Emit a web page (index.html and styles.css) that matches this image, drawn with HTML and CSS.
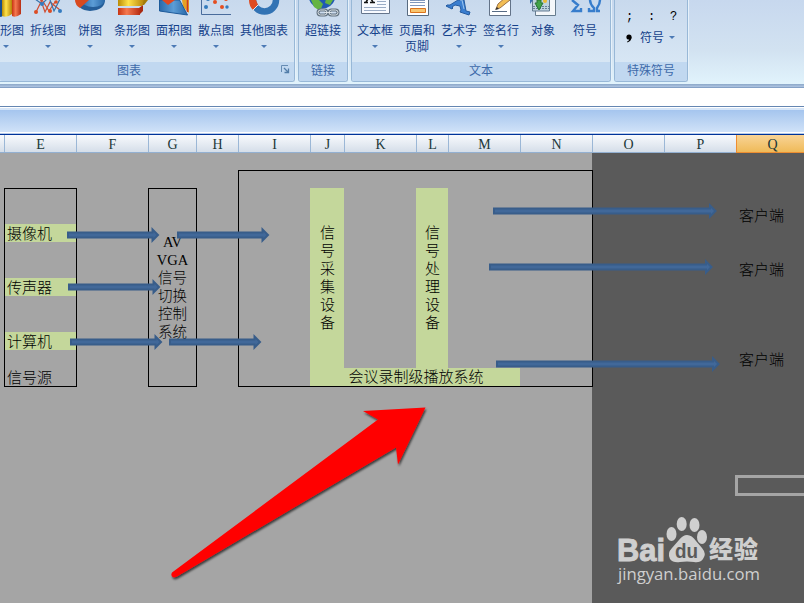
FILE: index.html
```
<!DOCTYPE html>
<html lang="zh-CN">
<head>
  <meta charset="utf-8">
  <title>会议录制级播放系统</title>
  <link rel="stylesheet" href="styles.css">
</head>
<body>
  <div class="ribbon">
    <div class="group charts">
      <div class="items">
        <div class="item">
          <svg width="42" height="18"><path d="M13 0h6v15l-3 2-3-1z" fill="#174f91"/><path d="M17 0h10v14q-5 4-10 2z" fill="url(#gold)"/><path d="M27 0h9v14q-5 4-9 2z" fill="url(#red)"/></svg>
          <span>柱形图</span><i class="arrow"></i>
        </div>
        <div class="item">
          <svg width="42" height="18"><path d="M9 12L15 0l7 11 6-9M13 -2l5 14 5-10 10 8" fill="none" stroke="#cf4d32" stroke-width="1.2"/><path d="M8 -1l7 5 7-7 5 14 6-12" fill="none" stroke="#3674ac" stroke-width="1.2"/><g fill="#dc4d25"><circle cx="9" cy="12" r="2"/><circle cx="23" cy="11" r="2"/><circle cx="29" cy="2" r="1.800"/></g><g fill="#347bc0"><circle cx="15" cy="4" r="2"/><circle cx="33" cy="11" r="2"/></g></svg>
          <span>折线图</span><i class="arrow"></i>
        </div>
        <div class="item">
          <svg width="42" height="18"><path d="M8 0Q8 10 21 11q15-1 15-11z" fill="#255e99"/><path d="M12 0q2 7 12 7 10 0 12-7z" fill="url(#blue)"/><path d="M6 0q0 5 5 8L20 0z" fill="#d84a20"/></svg>
          <span>饼图</span><i class="arrow"></i>
        </div>
        <div class="item">
          <svg width="42" height="18"><path d="M28 8l4-3v6l-4 4z" fill="#a92a12"/><path d="M7 8h22v7H7z" fill="url(#red)"/><path d="M32 0h5l-4 5h-2z" fill="#a37c08"/><path d="M7 0h26l-2 6H7z" fill="url(#gold)"/></svg>
          <span>条形图</span><i class="arrow"></i>
        </div>
        <div class="item">
          <svg width="42" height="18"><path d="M29 0h7v13l-6-6z" fill="#e6a125"/><path d="M34.500 0v12" stroke="#cc3928" stroke-width="1.500"/><path d="M6.500 0h20l8 15-28-4z" fill="url(#blue)" stroke="#1e5b9b"/><path d="M9 0h13l-7 5z" fill="#df4821"/></svg>
          <span>面积图</span><i class="arrow"></i>
        </div>
        <div class="item">
          <svg width="42" height="18"><path d="M6.500 0v14.500H36" fill="none" stroke="#496c9c"/><g fill="#e44e20"><circle cx="20" cy="2" r="2"/><circle cx="27" cy="7" r="2"/><circle cx="31" cy="-1" r="2"/></g><g fill="#347bbc"><circle cx="11" cy="7" r="2"/><circle cx="32" cy="7" r="1.700"/><circle cx="13" cy="-1" r="2"/></g></svg>
          <span>散点图</span><i class="arrow"></i>
        </div>
        <div class="item wide">
          <svg width="54" height="18"><path d="M16 0a11.500 11.500 0 0 0 23 0" fill="none" stroke="#3273b4" stroke-width="6.500"/><path d="M12 0q0 6 4 10l5-5-2-5z" fill="#df4b21"/><path d="M16 10l5-5" stroke="#efe6e5"/></svg>
          <span>其他图表</span><i class="arrow"></i>
        </div>
      </div>
      <div class="group-name">图表
        <svg class="launcher" width="9" height="9"><path d="M.5 7V.5H7" fill="none" stroke="#668cb3"/><path d="M3 3l4 4M7.500 3.500v4h-4" fill="none" stroke="#527da9" stroke-width="1.300"/></svg>
      </div>
    </div>

    <div class="group links">
      <div class="items">
        <div class="item">
          <svg width="42" height="18"><path d="M7 -1a13.500 13.500 0 0 0 26 0z" fill="#2059b4"/><path d="M9 0l8 0 4 4-3 7-6-4zM24 -1l7 1-3 5-5-2z" fill="#64b443"/><g fill="none" stroke="#60707e" stroke-width="3"><rect x="16" y="10" width="9" height="5" rx="2.500"/><rect x="27" y="10" width="9" height="5" rx="2.500"/></g><g fill="none" stroke="#dce3e8"><rect x="16" y="10" width="9" height="5" rx="2.500"/><rect x="27" y="10" width="9" height="5" rx="2.500"/><path d="M22 12.500h8"/></g></svg>
          <span>超链接</span>
        </div>
      </div>
      <div class="group-name">链接</div>
    </div>

    <div class="group text">
      <div class="items">
        <div class="item">
          <svg width="42" height="18"><path d="M7.500 -2h28v15.500h-28z" fill="#f8faff" stroke="#65758c"/><path d="M10 2.500h4M12 2l2-3M17 -1l2 3M16 2.500h5" stroke="#111" stroke-width="1.500"/><path d="M23 1.500h9M23 4.500h9M10 7.500h22M10 10.500h22" stroke="#9aabc5"/></svg>
          <span>文本框</span><i class="arrow"></i>
        </div>
        <div class="item">
          <svg width="42" height="18"><path d="M11.500 -2h21v17.500h-21z" fill="#fff" stroke="#586b80"/><path d="M14 .5h15M14 2.500h15M14 5.500h15" stroke="#8198bc"/><path d="M14.500 8.500h15v4h-15z" fill="#f8c56f" stroke="#dc741c"/></svg>
          <span>页眉和<br>页脚</span>
        </div>
        <div class="item">
          <svg width="42" height="18"><path d="M20 0h6l2 11 4 1-1 3-9-3 1-2-1-4-5-1-3 2 1 1-1 1-6-3 1-1 3 0z" fill="#3a7ed0" stroke="#245ba0"/><path d="M22 0h2l2 9" fill="none" stroke="#9bc5ef"/></svg>
          <span>艺术字</span><i class="arrow"></i>
        </div>
        <div class="item">
          <svg width="42" height="18"><path d="M9.500 -2h21v17.500h-21z" fill="#fff" stroke="#637388"/><path d="M12 11.500h15" stroke="#576b84"/><path d="M16 9l2-5 8-7 4 3-10 8z" fill="#f2bd54" stroke="#9b7044"/><path d="M15 10l4-1-2-2z" fill="#333"/></svg>
          <span>签名行</span><i class="arrow"></i>
        </div>
        <div class="item">
          <svg width="42" height="18"><path d="M13.500 -2h20v17.500h-20z" fill="#f4f7fa" stroke="#667c8e"/><path d="M10.500 -1h17v12h-17z" fill="#bdd2df" stroke="#627b92"/><path d="M11 6.500h16M11 8.500h16" stroke="#647f96" stroke-dasharray="2 1"/><path d="M15 0h4v3h2l-4 7-4-7h2z" fill="#41a349" stroke="#287537"/><circle cx="23" cy="1" r="2" fill="#eabb36"/><path d="M8 0h3l-3 4z" fill="#3771b1"/></svg>
          <span>对象</span>
        </div>
        <div class="item">
          <svg width="42" height="18"><path d="M9 0l6 5-5 6h8v-3M27 0q0 4 4 8v3h-5v-3M37 0q0 4-3 8v3h3" fill="none" stroke="#377dcc" stroke-width="2.400" transform="translate(-1)"/></svg>
          <span>符号</span>
        </div>
      </div>
      <div class="group-name">文本</div>
    </div>

    <div class="group special">
      <div class="marks">
        <b>;</b><b>:</b><b>?</b>
      </div>
      <div class="symbol-row"><svg width="6" height="9"><circle cx="3" cy="3" r="2.600"/><path d="M5.500 3q0 4-4 5.500l-.5-1q2-.5 2.500-3z"/></svg><span>符号</span><i class="arrow"></i></div>
      <div class="group-name">特殊符号</div>
    </div>
  </div>

  <div class="formula-bar"></div>
  <div class="window-title"></div>

  <div class="columns">
    <div>E</div><div>F</div><div>G</div><div>H</div><div>I</div><div>J</div><div>K</div><div>L</div><div>M</div><div>N</div><div>O</div><div>P</div><div class="current">Q</div>
  </div>

  <div class="sheet">
    <div class="cell green camera">摄像机</div>
    <div class="cell green mic">传声器</div>
    <div class="cell green computer">计算机</div>
    <div class="cell source">信号源</div>
    <div class="frame frame-source"></div>
    <div class="frame frame-switch"><p>AV<br>VGA<br>信号<br>切换<br>控制<br>系统</p></div>
    <div class="tall capture"><p>信号采集设备</p></div>
    <div class="tall process"><p>信号处理设备</p></div>
    <div class="system">会议录制级播放系统</div>
    <div class="frame frame-system"></div>
    <div class="client client-1">客户端</div>
    <div class="client client-2">客户端</div>
    <div class="client client-3">客户端</div>
    <div class="selection"></div>

    <svg class="drawing" width="804" height="451" viewBox="0 152 804 451">
      <defs>
        <linearGradient id="gold"><stop stop-color="#b98a04"/><stop offset=".4" stop-color="#ffe34a"/><stop offset="1" stop-color="#b58308"/></linearGradient>
        <linearGradient id="red"><stop stop-color="#c83413"/><stop offset=".4" stop-color="#f57950"/><stop offset="1" stop-color="#b72d14"/></linearGradient>
        <linearGradient id="blue"><stop stop-color="#2a69aa"/><stop offset=".5" stop-color="#5c9dd6"/><stop offset="1" stop-color="#2867a7"/></linearGradient>
        <filter id="shadow" x="-10%" y="-10%" width="120%" height="120%"><feDropShadow dx="1" dy="2" stdDeviation="1.300" flood-opacity=".65"/></filter>
      </defs>
      <g class="flow">
        <path d="M68 232.500h84.500v-3l5.500 5.500-5.500 5.500v-3H68z"/>
        <path d="M178 232.500h84.500v-3l5.500 5.500-5.500 5.500v-3H178z"/>
        <path d="M69 284.500h84.500v-3l5.500 5.500-5.500 5.500v-3H69z"/>
        <path d="M71 339.500h84.500v-3l5.500 5.500-5.500 5.500v-3H71z"/>
        <path d="M170 339.500h84.500v-3l5.500 5.500-5.500 5.500v-3H170z"/>
        <path d="M494 208.500h216v-3l5.500 5.500-5.500 5.500v-3H494z"/>
        <path d="M490 264.500h216v-3l5.500 5.500-5.500 5.500v-3H490z"/>
        <path d="M497 361.500h216v-3l5.500 5.500-5.500 5.500v-3H497z"/>
      </g>
      <path d="M425.500 407.500L363 411l15 8.500-206 153q-2 4 2 5l3-1 219-129 2 17z" fill="#f00" filter="url(#shadow)"/>
      <g class="watermark">
        <text x="617" y="561" class="bai" textLength="48" lengthAdjust="spacingAndGlyphs">Bai</text>
        <ellipse cx="671.500" cy="534" rx="5" ry="7"/>
        <ellipse cx="681.700" cy="524" rx="5" ry="7"/>
        <ellipse cx="694.500" cy="525" rx="5" ry="7"/>
        <ellipse cx="702" cy="537" rx="5" ry="7"/>
        <path d="M687 535q5 0 9 6l6 7q5 6 1 11-3 4-9 3-7-1-14 0-7 1-10-3-3-6 2-11l7-8q4-5 8-5z"/>
        <text x="675" y="558" class="du" textLength="23" lengthAdjust="spacingAndGlyphs">du</text>
        <text x="709" y="558" class="jingyan" textLength="49">经验</text>
        <text x="618" y="580" class="url" textLength="142" lengthAdjust="spacingAndGlyphs">jingyan.baidu.com</text>
      </g>
    </svg>
  </div>
</body>
</html>
```
FILE: styles.css
```
* {
  box-sizing: border-box;
}
body {
  margin: 0;
  width: 804px;
  height: 603px;
  overflow: hidden;
  font-family: "Liberation Sans", "Noto Sans CJK SC", sans-serif;
}
p {
  margin: 0;
}

/* ribbon */
.ribbon {
  height: 84px;
  display: flex;
  background: linear-gradient(#c7d8ee, #d2e2f1 60%, #e1f3fc);
}
.group {
  height: 82px;
  margin-right: 3px;
  display: flex;
  flex-direction: column;
  border: 1px solid #98b8d7;
  border-top: 0;
  border-radius: 0 0 3px 3px;
  box-shadow: 1px 0 #e6f1fa;
  background: linear-gradient(#c8d9ed, #d7e6f4 76%);
}
.charts {
  width: 295px;
  border-left: 0;
  border-bottom-left-radius: 0;
}
.charts .items {
  margin-left: -15px;
}
.links {
  width: 50px;
}
.links .items {
  padding-left: 3px;
}
.text {
  width: 260px;
}
.text .items {
  padding-left: 2px;
}
.special {
  width: 74px;
}
.items {
  height: 62px;
  display: flex;
}
.item {
  width: 42px;
  flex: none;
  display: flex;
  flex-direction: column;
  align-items: center;
  color: #15428b;
  font-size: 12px;
  line-height: 16px;
  text-align: center;
  white-space: nowrap;
}
.item.wide {
  width: 54px;
}
.item svg {
  flex: none;
  margin-bottom: 5px;
}
.arrow {
  margin-top: 6px;
  border: 3px solid transparent;
  border-top-color: #4c7ab5;
  border-bottom: 0;
}
.group-name {
  height: 19px;
  display: flex;
  justify-content: center;
  align-items: center;
  position: relative;
  background: #c1d8f0;
  color: #3e6aaa;
  font-size: 12px;
  line-height: 17px;
  padding-bottom: 1px;
  border-radius: 0 0 2px 2px;
}
.charts .group-name {
  padding-right: 36px;
}
.launcher {
  position: absolute;
  right: 4px;
  top: 3px;
}
.marks {
  height: 28px;
  padding: 8px 9px 0 11px;
  display: flex;
  justify-content: space-between;
  font: 12px/18px "Liberation Mono", monospace;
}
.marks b {
  width: 8px;
  font-weight: normal;
}
.symbol-row {
  height: 34px;
  padding-left: 11px;
  display: flex;
  align-items: flex-start;
  color: #15428b;
  font-size: 12px;
  line-height: 21px;
}
.symbol-row svg {
  margin: 6px 8px 0 0;
}
.symbol-row .arrow {
  margin: 8px 0 0 5px;
}

.formula-bar {
  height: 23px;
  background: #fff;
  border-top: 4px solid #a5bddb;
  border-bottom: 1px solid #6586b2;
  border-image: linear-gradient(#8ba7c8, #adc3e0 12%, #adc3e0 13%, #6586b2 17%, #6586b2) 4 0 1;
}
.window-title {
  height: 28px;
  background: linear-gradient(#fff 1px, #d5e5f8 1px, #d5e5f8 3px, #a5c5ee 3px, #d0e2f8 25px, #fff 25px, #fff 26px, #b7cbea 26px);
  border-bottom: 1px solid #003399;
}

/* worksheet */
.columns,
.sheet {
  display: grid;
  grid-template-columns: 72px 72px 48px 42px 72px 34px 72px 32px 72px 72px 72px 72px 68px;
  padding-left: 4px;
}
.columns {
  height: 18px;
  grid-template-rows: 17px;
  position: relative;
  z-index: 1;
  background: linear-gradient(#f8fafd, #d5dee9);
  border-bottom: 1px solid #93b0d1;
}
.columns div {
  border-left: 1px solid #9bb7d6;
  color: #203838;
  font: 14px/20px "Liberation Serif", serif;
  text-align: center;
}
.columns .current {
  height: 18px;
  padding-left: 4px;
  background: linear-gradient(#f9d496, #efba59);
  border-left-color: #ee8e31;
  border-bottom: 1px solid #ee8e31;
}
.sheet {
  height: 451px;
  margin-top: -1px;
  position: relative;
  grid-template-rows: repeat(25, 18px);
  background: linear-gradient(90deg, #a5a5a5 592px, #5a5a5a 592px);
  font-family: "Liberation Serif", "Noto Sans CJK SC", serif;
  font-size: 15px;
  font-weight: 300;
  line-height: 18px;
}
.cell {
  grid-column: 1;
  padding-left: 3px;
  line-height: 21px;
}
.green,
.tall,
.system {
  background: #c4d79b;
}
.camera {
  grid-row: 5;
}
.mic {
  grid-row: 8;
}
.computer {
  grid-row: 11;
}
.source {
  grid-row: 13;
}
.frame {
  border: 1px solid #000;
  margin: 0 -1px -1px 0;
}
.frame-source {
  grid-area: 3 / 1 / 14 / 2;
}
.frame-switch {
  grid-area: 3 / 3 / 14 / 4;
  display: flex;
  justify-content: center;
  align-items: center;
  padding-bottom: 1px;
  font-size: 14.5px;
  text-align: center;
}
.frame-system {
  grid-area: 2 / 5 / 14 / 11;
}
.tall {
  display: flex;
  justify-content: center;
  align-items: center;
  padding-left: 1px;
}
.tall p {
  width: 15px;
}
.capture {
  grid-area: 3 / 6 / 13 / 7;
}
.process {
  grid-area: 3 / 8 / 13 / 9;
}
.system {
  grid-area: 13 / 6 / 14 / 10;
  padding-left: 2px;
  line-height: 19px;
  text-align: center;
}
.client {
  grid-column: 13;
  padding-left: 3px;
  line-height: 21px;
}
.client-1 {
  grid-row: 4;
}
.client-2 {
  grid-row: 7;
}
.client-3 {
  grid-row: 12;
}
.selection {
  grid-area: 19 / 13 / 20 / 14;
  margin: -1px 0 -2px -1px;
  border: 3px solid #a5a5a5;
  border-right: 0;
}

/* shapes floating over the cells */
.drawing {
  position: absolute;
  left: 0;
  top: 0;
}
.flow path {
  fill: #416899;
  stroke: #385d8a;
  stroke-width: 2;
}
.watermark {
  fill: #cfcfcf;
}
.bai {
  font: bold 32px "Liberation Sans", sans-serif;
  stroke: #cfcfcf;
}
.du {
  font: bold 20px "Liberation Sans", sans-serif;
  fill: #5a5a5a;
}
.jingyan {
  font: 900 24px "Noto Sans CJK SC", sans-serif;
}
.url {
  font: 17px "Open Sans", sans-serif;
}
```
